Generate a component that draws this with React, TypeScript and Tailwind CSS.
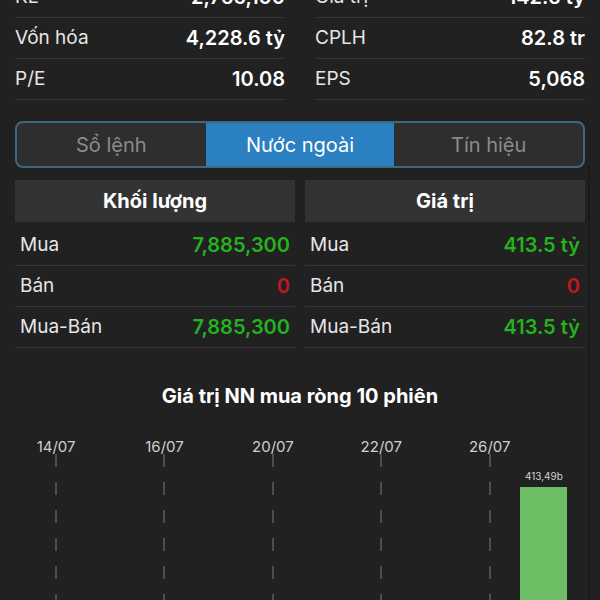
import React from 'react'

const stats = [
  [
    { label: 'KL', value: '2,765,100' },
    { label: 'Vốn hóa', value: '4,228.6 tỷ' },
    { label: 'P/E', value: '10.08' },
  ],
  [
    { label: 'Giá trị', value: '142.6 tỷ' },
    { label: 'CPLH', value: '82.8 tr' },
    { label: 'EPS', value: '5,068' },
  ],
]

const tabs = ['Sổ lệnh', 'Nước ngoài', 'Tín hiệu']

const foreign = [
  {
    title: 'Khối lượng',
    rows: [
      { label: 'Mua', value: '7,885,300', color: 'text-[#22b31f]' },
      { label: 'Bán', value: '0', color: 'text-[#c4161c]' },
      { label: 'Mua-Bán', value: '7,885,300', color: 'text-[#22b31f]' },
    ],
  },
  {
    title: 'Giá trị',
    rows: [
      { label: 'Mua', value: '413.5 tỷ', color: 'text-[#22b31f]' },
      { label: 'Bán', value: '0', color: 'text-[#c4161c]' },
      { label: 'Mua-Bán', value: '413.5 tỷ', color: 'text-[#22b31f]' },
    ],
  },
]

// 10 sessions, only every other one gets a date label
const sessions = [
  { date: '14/07', value: 0 },
  { date: '', value: 0 },
  { date: '16/07', value: 0 },
  { date: '', value: 0 },
  { date: '20/07', value: 0 },
  { date: '', value: 0 },
  { date: '22/07', value: 0 },
  { date: '', value: 0 },
  { date: '26/07', value: 0 },
  { date: '', value: 413.49 },
]

const DashLine = () => (
  <svg width="2" height="150" className="block">
    <line x1="1" y1="0" x2="1" y2="150" stroke="#5a5a5a" strokeWidth="1.6" strokeDasharray="13 15" />
  </svg>
)

const App = () => {
  return (
    <div
      className="relative h-[600px] w-[600px] overflow-hidden bg-[#212121] text-[#ececec]"
      style={{ fontFamily: 'Inter, "Noto Sans", sans-serif' }}
    >
      <div className="absolute right-[10px] top-[165px] h-[440px] w-[2px] bg-[#1a1a1a]" />

      {/* stats */}
      <div className="mt-[-23px] grid grid-cols-2 gap-x-[30px] px-[15px]">
        {stats.map((col, i) => (
          <div key={i}>
            {col.map((s) => (
              <div key={s.label} className="flex h-[41px] items-center justify-between border-b border-[#343434]">
                <span className="text-[19px] text-[#e6e6e6]">{s.label}</span>
                <span className="text-[20px] font-semibold text-white">{s.value}</span>
              </div>
            ))}
          </div>
        ))}
      </div>

      {/* tabs */}
      <div className="mx-[15px] mt-[21px] flex h-[47px] overflow-hidden rounded-[8px] border-2 border-[#3f6782] bg-[#2e2e2e]">
        {tabs.map((t, i) => (
          <div
            key={t}
            className={
              i === 1
                ? 'flex flex-1 items-center justify-center bg-[#2a80c1] text-[20px] text-white'
                : 'flex flex-1 items-center justify-center text-[20px] text-[#8b8b8b]'
            }
          >
            {t}
          </div>
        ))}
      </div>

      {/* foreign trading */}
      <div className="mt-[12px] grid grid-cols-2 gap-x-[10px] px-[15px]">
        {foreign.map((col) => (
          <div key={col.title}>
            <div className="flex h-[42px] items-center justify-center bg-[#333333] text-[20px] font-bold text-white">
              {col.title}
            </div>
            <div className="mt-[3px]">
              {col.rows.map((r) => (
                <div key={r.label} className="flex h-[41px] items-center justify-between border-b border-[#343434] px-[5px]">
                  <span className="text-[19px] text-[#e6e6e6]">{r.label}</span>
                  <span className={`text-[20px] font-semibold ${r.color}`}>{r.value}</span>
                </div>
              ))}
            </div>
          </div>
        ))}
      </div>

      {/* chart */}
      <div className="mt-[36px] text-center text-[20px] font-bold leading-[24px] text-white">
        Giá trị NN mua ròng 10 phiên
      </div>
      <div className="ml-[29px] mt-[29px] grid w-[542px] grid-cols-10">
        {sessions.map((s, i) => (
          <div key={i} className="flex flex-col items-center">
            <div className="h-[20px] text-[15px] leading-[20px] text-[#cfcfcf]">{s.date}</div>
            <div className="mt-[-3px] flex h-[170px] w-full flex-col items-center">
              {s.date && <DashLine />}
              {s.value > 0 && (
                <>
                  <div className="mt-[16px] text-[10px] leading-[12px] text-[#d0d0d0]">413,49b</div>
                  <div className="mt-[5px] h-[140px] w-[47px] bg-[#6cbd64]" />
                </>
              )}
            </div>
          </div>
        ))}
      </div>
    </div>
  )
}

export default App
